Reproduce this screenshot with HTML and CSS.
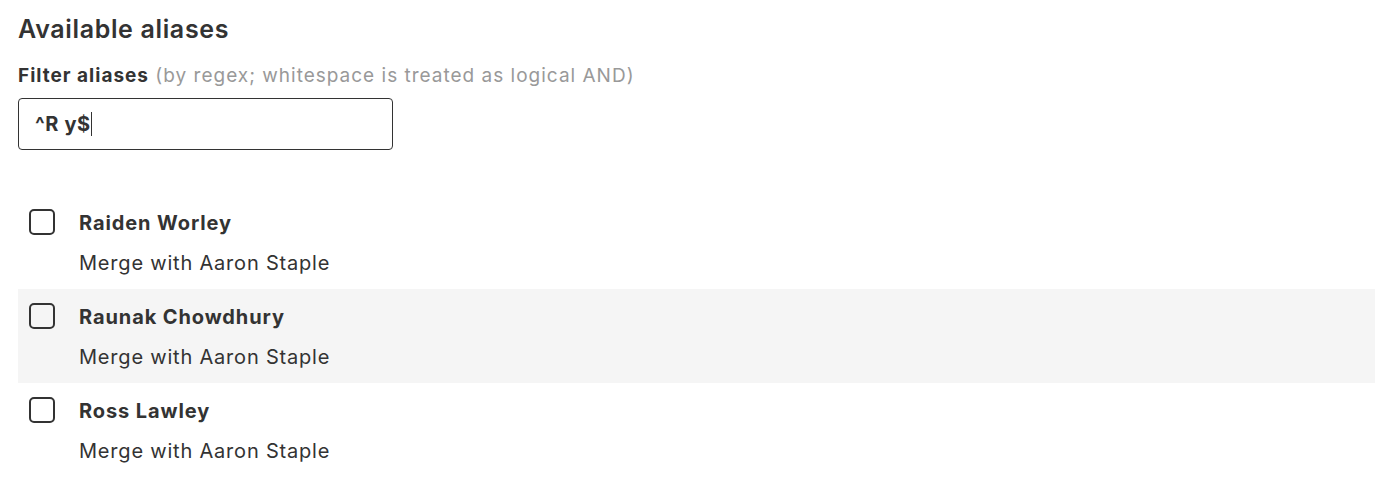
FILE: index.html
```html
<!DOCTYPE html>
<html lang="en">
<head>
<meta charset="utf-8">
<title>Available aliases</title>
<link rel="stylesheet" href="styles.css">
</head>
<body>
<main class="page">
  <h2 class="title">Available aliases</h2>
  <label class="filter-label" for="filter"><strong>Filter aliases</strong> <span class="hint">(by regex; whitespace is treated as logical AND)</span></label>
  <div class="input-box"><span class="input-text">^R y$</span><span class="caret"></span></div>
  <ul class="alias-list">
    <li class="alias-row">
      <span class="checkbox"></span>
      <div class="alias-info">
        <div class="alias-name">Raiden Worley</div>
        <div class="alias-action">Merge with Aaron Staple</div>
      </div>
    </li>
    <li class="alias-row alias-row--alt">
      <span class="checkbox"></span>
      <div class="alias-info">
        <div class="alias-name">Raunak Chowdhury</div>
        <div class="alias-action">Merge with Aaron Staple</div>
      </div>
    </li>
    <li class="alias-row">
      <span class="checkbox"></span>
      <div class="alias-info">
        <div class="alias-name">Ross Lawley</div>
        <div class="alias-action">Merge with Aaron Staple</div>
      </div>
    </li>
  </ul>
</main>
</body>
</html>
```
FILE: styles.css
```css
* { box-sizing: border-box; }
html, body { margin: 0; padding: 0; background: #fff; }
body {
  font-family: Inter, "Noto Sans", sans-serif;
  color: #333;
}
.page {
  padding: 14px 19px 0 18px;
}
.title {
  margin: 0;
  font-size: 25px;
  font-weight: 600;
  line-height: 30px;
  letter-spacing: 0.65px;
}
.filter-label {
  display: block;
  margin-top: 20px;
  font-size: 19px;
  line-height: 24px;
  letter-spacing: 1px;
}
.filter-label strong { font-weight: 700; }
.hint { color: #999; }
.input-box {
  margin-top: 10px;
  width: 375px;
  height: 52px;
  border: 1px solid #333;
  border-radius: 4px;
  display: flex;
  align-items: center;
  padding-left: 16px;
}
.input-text {
  font-size: 20px;
  font-weight: 700;
  letter-spacing: 0.6px;
}
.caret {
  display: inline-block;
  width: 1.5px;
  height: 24px;
  background: #333;
}
.alias-list {
  list-style: none;
  margin: 45px 0 0;
  padding: 0;
}
.alias-row {
  display: flex;
  align-items: flex-start;
  height: 94px;
  padding: 14px 0 0 11px;
}
.alias-row--alt { background: #f5f5f5; }
.checkbox {
  flex: none;
  width: 26px;
  height: 26px;
  border: 2.75px solid #333;
  border-radius: 5px;
  background: #fff;
}
.alias-row--alt .checkbox { background: #f5f5f5; }
.alias-info {
  margin-left: 24px;
}
.alias-name {
  font-size: 20px;
  font-weight: 700;
  line-height: 28px;
  letter-spacing: 0.9px;
}
.alias-action {
  margin-top: 12px;
  font-size: 20px;
  line-height: 28px;
  letter-spacing: 0.8px;
}
```
